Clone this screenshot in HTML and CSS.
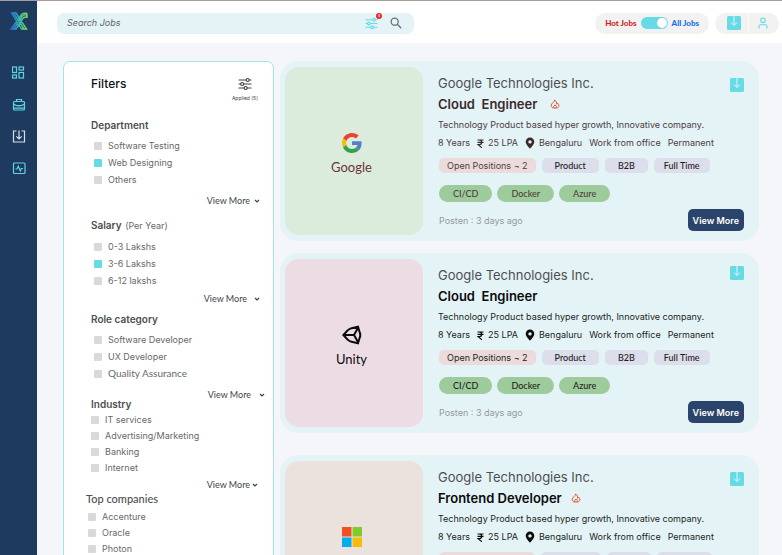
FILE: index.html
```html
<!DOCTYPE html>
<html lang="en">
<head>
<meta charset="utf-8">
<meta name="viewport" content="width=device-width, initial-scale=1">
<title>Jobs</title>
<link rel="stylesheet" href="styles.css">
</head>
<body>
<svg class="sprite" aria-hidden="true">
  <symbol id="sliders" viewBox="0 0 14 14"><g fill="none" stroke="currentColor" stroke-width="1.2" stroke-linecap="round"><path d="M1 3h7M11.500 3H13M1 7h1.500M6 7h7M1 11h5M9.500 11H13"/><circle cx="9.700" cy="3" r="1.500"/><circle cx="4.200" cy="7" r="1.500"/><circle cx="7.700" cy="11" r="1.500"/></g></symbol>
  <symbol id="save" viewBox="0 0 14 14"><rect width="14" height="14" rx="1.500" fill="#66dbe5"/><path d="M7 0v9.300M4 6.500l3 3 3-3" fill="none" stroke="#e4f4f7" stroke-width="1"/></symbol>
  <symbol id="chevron" viewBox="0 0 6 6"><path d="M1 2l2 2 2-2" fill="none" stroke="currentColor" stroke-width="1.200"/></symbol>
  <symbol id="rupee" viewBox="0 0 7 9"><path d="M.5 1h6M.5 3.300h6M.8 1h1.500c3.200 0 3.200 4.600 0 4.600H1L4.900 8.700" fill="none" stroke="currentColor" stroke-width="1.200"/></symbol>
  <symbol id="pin" viewBox="0 0 10 12"><path fill="currentColor" fill-rule="evenodd" d="M5 .5a4.300 4.300 0 0 0-4.300 4.300C.7 7.800 5 11.700 5 11.700s4.300-3.900 4.300-6.900A4.300 4.300 0 0 0 5 .5zm0 2.700a1.700 1.700 0 1 1 0 3.400 1.700 1.700 0 0 1 0-3.400z"/></symbol>
  <symbol id="flame" viewBox="0 0 10 10"><path d="M4.700 1C4.700 3 1.200 4.200 1.200 6.500 1.200 8 2.300 9 3.500 9h3C7.900 9 8.900 8 8.900 6.600c0-1-.6-1.800-1.200-2.400-.2.600-.5.900-1 1C6.700 3.400 6.100 1.800 4.700 1zM3.700 8.800V7.300L5 5.900l1.300 1.400v1.500" fill="none" stroke="#e8542f" stroke-width="1" stroke-linejoin="round"/></symbol>
</svg>
<div class="app">
  <nav class="sidebar" aria-label="Main">
    <a class="logo" href="#" aria-label="Home">
      <svg viewBox="0 0 18 18" width="18" height="18" fill="none">
        <defs><linearGradient id="lg" x1="0" y1="0" x2="1" y2="0"><stop offset="0" stop-color="#2f6bd8"/><stop offset=".5" stop-color="#35b6b4"/><stop offset="1" stop-color="#7fe04a"/></linearGradient></defs>
        <g stroke="url(#lg)" stroke-width="1.400"><path d="M1.500 1h4.500l10.500 16h-5zM3.500 1L14 17M17 1.500c-3-.6-5.500.5-6.500 2.500L1 17h5L12.500 7M3.500 17L12 4.500c1-1.500 2.500-2 5-1.500M12.500 7c1-1.600 2.500-2.200 4-2M17 1.500V6"/></g>
      </svg>
    </a>
    <a class="nav-item" href="#" aria-label="Dashboard"><svg viewBox="0 0 14 14" width="14" height="14" fill="none" stroke="currentColor" stroke-width="1.200"><rect x=".5" y="1" width="4" height="5.500"/><rect x="7" y="1" width="4.500" height="3"/><rect x=".5" y="9" width="4" height="3"/><rect x="7" y="6.500" width="4.500" height="5.500"/></svg></a>
    <a class="nav-item" href="#" aria-label="Jobs"><svg viewBox="0 0 14 14" width="14" height="14" fill="none" stroke="currentColor" stroke-width="1.200"><rect x="1.500" y="3.500" width="11" height="8.500" rx="1"/><path d="M4.500 3.500v-2h5v2M1.500 6C4 8.500 10 8.500 12.500 6M6 7.700h2M1.500 10.200h11"/></svg></a>
    <a class="nav-item nav-item--light" href="#" aria-label="Saved"><svg viewBox="0 0 14 14" width="14" height="14" fill="none" stroke="currentColor" stroke-width="1.200"><path d="M4.500 1h-3v11h11V1h-3M7 .5V9M4.300 6.300L7 9l2.700-2.700"/></svg></a>
    <a class="nav-item" href="#" aria-label="Activity"><svg viewBox="0 0 14 14" width="14" height="14" fill="none" stroke="currentColor" stroke-width="1.200"><rect x="1.500" y="1" width="11.500" height="10.500" rx="1"/><path d="M3.500 7H5l1.300-2.800 2 4.800 1-2.500H11"/></svg></a>
  </nav>

  <div class="page">
    <header class="topbar">
      <form class="search" role="search">
        <input class="search-input" type="search" placeholder="Search Jobs" aria-label="Search Jobs">
        <button class="icon-btn search-filter" type="button" aria-label="Filters"><svg width="13" height="13"><use href="#sliders"/></svg><span class="badge">4</span></button>
        <button class="icon-btn search-go" type="submit" aria-label="Search"><svg viewBox="0 0 12 12" width="12" height="12" fill="none" stroke="#6c7072" stroke-width="1.300"><circle cx="4.700" cy="4.700" r="3.500"/><path d="M7.300 7.300l3.900 3.900"/></svg></button>
      </form>
      <div class="pill">
        <label class="hot" for="scope">Hot Jobs</label>
        <input class="switch" id="scope" type="checkbox" role="switch" checked>
        <label class="all" for="scope">All Jobs</label>
      </div>
      <div class="pill pill--split">
        <button class="icon-btn split-cell" type="button" aria-label="Saved jobs"><svg width="14" height="14"><use href="#save"/></svg></button>
        <button class="icon-btn split-cell" type="button" aria-label="Profile"><svg viewBox="0 0 12 12" width="12" height="12" fill="none" stroke="#66dbe5" stroke-width="1.100"><circle cx="6" cy="3.300" r="2.300"/><path d="M2 11.500V9.300q0-1.500 1.500-1.500h5q1.500 0 1.500 1.500v2.200"/></svg></button>
      </div>
    </header>

    <main class="content">
      <aside class="filters">
        <div class="filters-head">
          <h2>Filters</h2>
          <div class="applied"><svg width="14" height="14"><use href="#sliders"/></svg><span>Applied (5)</span></div>
        </div>
        <fieldset class="group">
          <legend>Department</legend>
          <label><input type="checkbox">Software Testing</label>
          <label><input type="checkbox" checked>Web Designing</label>
          <label><input type="checkbox">Others</label>
          <button class="more" type="button">View More <svg width="6" height="6"><use href="#chevron"/></svg></button>
        </fieldset>
        <fieldset class="group">
          <legend>Salary <small>(Per Year)</small></legend>
          <label><input type="checkbox">0-3 Lakshs</label>
          <label><input type="checkbox" checked>3-6 Lakshs</label>
          <label><input type="checkbox">6-12 lakshs</label>
          <button class="more more--wide" type="button">View More <svg width="6" height="6"><use href="#chevron"/></svg></button>
        </fieldset>
        <fieldset class="group group--role">
          <legend>Role category</legend>
          <label><input type="checkbox">Software Developer</label>
          <label><input type="checkbox">UX Developer</label>
          <label class="lato"><input type="checkbox">Quality Assurance</label>
          <button class="more more--edge" type="button">View More <svg width="6" height="6"><use href="#chevron"/></svg></button>
        </fieldset>
        <fieldset class="group group--dense">
          <legend>Industry</legend>
          <label><input type="checkbox">IT services</label>
          <label><input type="checkbox">Advertising/Marketing</label>
          <label><input type="checkbox">Banking</label>
          <label><input type="checkbox">Internet</label>
          <button class="more more--tight" type="button">View More <svg width="6" height="6"><use href="#chevron"/></svg></button>
        </fieldset>
        <fieldset class="group group--dense group--companies">
          <legend>Top companies</legend>
          <label><input type="checkbox">Accenture</label>
          <label><input type="checkbox">Oracle</label>
          <label><input type="checkbox">Photon</label>
        </fieldset>
      </aside>

      <section class="jobs" aria-label="Jobs">
        <article class="card card--visited">
          <div class="brand brand--green">
            <svg viewBox="0 0 48 48" width="20" height="20"><path fill="#ea4335" d="M24 9.500c3.540 0 6.710 1.220 9.210 3.600l6.850-6.850C35.900 2.380 30.470 0 24 0 14.620 0 6.510 5.380 2.560 13.220l7.980 6.190C12.430 13.720 17.740 9.500 24 9.500z"/><path fill="#5680c4" d="M46.980 24.550c0-1.570-.15-3.090-.38-4.550H24v9.020h12.940c-.58 2.960-2.260 5.480-4.780 7.180l7.730 6c4.510-4.180 7.090-10.360 7.090-17.650z"/><path fill="#fbbc05" d="M10.530 28.590c-.48-1.450-.76-2.990-.76-4.590s.27-3.140.76-4.590l-7.980-6.190C.92 16.460 0 20.120 0 24c0 3.880.92 7.540 2.560 10.780l7.970-6.190z"/><path fill="#34a04c" d="M24 48c6.480 0 11.930-2.130 15.890-5.810l-7.730-6c-2.150 1.450-4.920 2.300-8.160 2.300-6.260 0-11.570-4.220-13.470-9.910l-7.980 6.190C6.510 42.620 14.620 48 24 48z"/></svg>
            <span>Google</span>
          </div>
          <div class="info">
            <div class="head"><p class="company">Google Technologies Inc.</p><button class="icon-btn" type="button" aria-label="Save job"><svg width="14" height="14"><use href="#save"/></svg></button></div>
            <h3>Cloud&nbsp; Engineer <svg width="10" height="10"><use href="#flame"/></svg></h3>
            <p class="desc">Technology Product based hyper growth, Innovative company.</p>
            <ul class="meta"><li>8 Years</li><li><svg width="7" height="9"><use href="#rupee"/></svg>25 LPA</li><li><svg width="10" height="12"><use href="#pin"/></svg>Bengaluru</li><li>Work from office</li><li>Permanent</li></ul>
            <ul class="tags"><li class="open">Open Positions ¬ 2</li><li>Product</li><li>B2B</li><li>Full Time</li></ul>
            <ul class="skills"><li>CI/CD</li><li>Docker</li><li>Azure</li></ul>
            <div class="foot"><span>Posten : 3 days ago</span><button class="view" type="button">View More</button></div>
          </div>
        </article>

        <article class="card card--top-save">
          <div class="brand brand--pink">
            <svg viewBox="0 0 20 20" width="20" height="20" fill="none" stroke="#0b0b0c" stroke-width="2"><path d="M8.500 3.500L16 1.800l2.200 7.200M18.200 11L16 18.200l-7.500-1.700M6 5L1.300 10 6 15M1.300 10H12M12 10l4.500-8M12 10l4.500 8M6 5l2.500-1.500M6 15l2.500 1.500M18.200 8v4"/></svg>
            <span>Unity</span>
          </div>
          <div class="info">
            <div class="head"><p class="company">Google Technologies Inc.</p><button class="icon-btn" type="button" aria-label="Save job"><svg width="14" height="14"><use href="#save"/></svg></button></div>
            <h3>Cloud&nbsp; Engineer</h3>
            <p class="desc">Technology Product based hyper growth, Innovative company.</p>
            <ul class="meta"><li>8 Years</li><li><svg width="7" height="9"><use href="#rupee"/></svg>25 LPA</li><li><svg width="10" height="12"><use href="#pin"/></svg>Bengaluru</li><li>Work from office</li><li>Permanent</li></ul>
            <ul class="tags"><li class="open">Open Positions ¬ 2</li><li>Product</li><li>B2B</li><li>Full Time</li></ul>
            <ul class="skills"><li>CI/CD</li><li>Docker</li><li>Azure</li></ul>
            <div class="foot"><span>Posten : 3 days ago</span><button class="view" type="button">View More</button></div>
          </div>
        </article>

        <article class="card card--next">
          <div class="brand brand--sand">
            <svg viewBox="0 0 20 20" width="20" height="20"><path fill="#f25022" d="M0 0h9.500v9.500H0z"/><path fill="#80cc28" d="M10.500 0H20v9.500h-9.500z"/><path fill="#00adef" d="M0 10.500h9.500V20H0z"/><path fill="#fbbc09" d="M10.500 10.500H20V20h-9.500z"/></svg>
          </div>
          <div class="info">
            <div class="head"><p class="company">Google Technologies Inc.</p><button class="icon-btn" type="button" aria-label="Save job"><svg width="14" height="14"><use href="#save"/></svg></button></div>
            <h3>Frontend Developer <svg width="10" height="10"><use href="#flame"/></svg></h3>
            <p class="desc">Technology Product based hyper growth, Innovative company.</p>
            <ul class="meta"><li>8 Years</li><li><svg width="7" height="9"><use href="#rupee"/></svg>25 LPA</li><li><svg width="10" height="12"><use href="#pin"/></svg>Bengaluru</li><li>Work from office</li><li>Permanent</li></ul>
            <ul class="tags tags--empty"><li class="open"></li><li></li><li></li><li></li></ul>
          </div>
        </article>
      </section>
    </main>
  </div>
</div>
</body>
</html>
```
FILE: styles.css
```css
* { box-sizing: border-box; }
body, h2, h3, p, ul, fieldset { margin: 0; padding: 0; }
ul { list-style: none; }
fieldset { border: 0; min-width: 0; }
svg { display: block; flex: none; }
button { font: inherit; cursor: pointer; }

body {
  background: #f5f6fa;
  color: #1d1f21;
  font-family: Inter, "Liberation Sans", sans-serif;
  font-size: 9px;
}

.sprite { position: absolute; width: 0; height: 0; }

.app {
  display: flex;
  height: 100vh;
  overflow: hidden;
  border-top: 1px solid #a99b9f;
}

/* Sidebar */
.sidebar {
  flex: none;
  width: 37px;
  padding-top: 11px;
  display: flex;
  flex-direction: column;
  align-items: center;
  gap: 18px;
  background: #1f3a5f;
}
.logo { margin-bottom: 18px; }
.nav-item { color: #5fd3e0; }
.nav-item--light { color: #d5dfea; }

.page {
  flex: 1;
  min-width: 0;
  display: flex;
  flex-direction: column;
}

/* Top bar */
.topbar {
  flex: none;
  display: flex;
  align-items: center;
  gap: 6px;
  height: 42px;
  padding: 2px 3px 0 20px;
  background: #fff;
}
.search {
  flex: 0 1 357px;
  display: flex;
  align-items: center;
  gap: 12px;
  height: 21px;
  margin-right: auto;
  padding: 0 12px 0 10px;
  border-radius: 7px;
  background: #e4f3f6;
}
.search-input {
  flex: 1;
  min-width: 0;
  padding: 0;
  border: 0;
  outline: 0;
  background: none;
  font: italic 9px/12px Inter, "Liberation Sans", sans-serif;
}
.search-input::placeholder { color: #606466; opacity: 1; }
.icon-btn {
  display: block;
  padding: 0;
  border: 0;
  background: none;
}
.search-filter { position: relative; color: #66dbe5; }
.badge {
  position: absolute;
  top: -4px;
  right: -4px;
  width: 6px;
  height: 6px;
  border-radius: 50%;
  background: #e02b2b;
  color: #fff;
  font-size: 4px;
  line-height: 6px;
  text-align: center;
}
.pill {
  display: flex;
  align-items: center;
  gap: 4px;
  height: 21px;
  padding: 0 10px;
  border-radius: 11px;
  background: #f2f2f2;
  font: 900 8px/12px Lato, sans-serif;
}
.hot { color: #d01f1f; }
.all { color: #1570e8; }
.switch {
  appearance: none;
  display: flex;
  justify-content: flex-end;
  width: 27px;
  height: 12px;
  margin: 0;
  padding: 1px;
  border-radius: 6px;
  background: #66dbe5;
}
.switch::before {
  content: "";
  width: 10px;
  height: 10px;
  border-radius: 50%;
  background: #fff;
}
.pill--split { gap: 0; padding: 0 2px 0 4px; }
.split-cell {
  display: flex;
  align-items: center;
  justify-content: center;
  width: 29px;
  height: 21px;
}
.split-cell + .split-cell { border-left: 1px solid #fafafa; }

/* Content */
.content {
  flex: 1;
  min-height: 0;
  display: grid;
  grid-template-columns: 211px minmax(0, 1fr);
  align-items: start;
  gap: 6px;
  padding: 18px 23px 0 26px;
  overflow: hidden auto;
  scrollbar-width: none;
}

/* Filters */
.filters {
  padding: 13px 13px 16px 27px;
  border: 1px solid #9fe5ea;
  border-radius: 7px;
  background: #fff;
}
.filters-head {
  display: flex;
  justify-content: space-between;
  height: 43px;
}
.filters h2 {
  color: #111;
  font-size: 12px;
  font-weight: 500;
  line-height: 18px;
}
.applied {
  display: flex;
  flex-direction: column;
  align-items: center;
  gap: 3px;
  padding: 2px 2px 0 0;
  color: #444;
  font-size: 5px;
  line-height: 8px;
}
.group { margin-bottom: 11px; color: #66696b; }
.group legend {
  margin-bottom: 5px;
  padding: 0;
  color: #4c4f51;
  font-size: 10px;
  font-weight: 600;
  line-height: 14px;
}
.group small {
  padding-left: 1px;
  color: #66696b;
  font-size: 9px;
  font-weight: 400;
}
.group label {
  display: flex;
  align-items: center;
  gap: 6px;
  padding-left: 3px;
  line-height: 17px;
}
.group label.lato { font: 10px/17px Lato, sans-serif; }
.group input {
  appearance: none;
  width: 8px;
  height: 8px;
  margin: 0;
  border-radius: 1px;
  background: #d9d9d9;
}
.group input:checked { background: #66dbe5; }
.more {
  display: flex;
  align-items: center;
  gap: 4px;
  margin: 7px 0 0 auto;
  padding: 0;
  border: 0;
  background: none;
  color: #3d434c;
  font: 9px/12px Lato, sans-serif;
}
.more--wide { gap: 7px; margin-top: 4px; }
.more--edge { gap: 8px; margin-right: -5px; }
.more--tight { gap: 2px; margin: 3px 2px 0 auto; }
.group:nth-of-type(2) { margin-bottom: 7px; }
.group--role { margin-bottom: -4px; }
.group--dense { margin-bottom: 1px; }
.group--dense legend { margin-bottom: 1px; }
.group--dense label { padding-left: 0; line-height: 16px; }
.group--companies { margin-left: -5px; }
.group--companies legend {
  margin-bottom: 3px;
  font: 500 11px/14px Lato, sans-serif;
}
.group--companies label { padding-left: 2px; }

/* Job cards */
.jobs {
  display: flex;
  flex-direction: column;
  gap: 12px;
}
.card {
  display: grid;
  grid-template-columns: 138px minmax(0, 1fr);
  gap: 15px;
  padding: 6px 15px 6px 5px;
  border-radius: 18px;
  background: #e3f3f6;
}
.card--next { margin-top: 10px; }
.brand {
  display: flex;
  flex-direction: column;
  align-items: center;
  justify-content: center;
  gap: 4px;
  padding: 8px 5px 0 0;
  border-radius: 14px;
  color: #0b0b0c;
  font: 13px/20px Lato, sans-serif;
}
.brand--green { background: #dcecdc; color: #6b3438; }
.brand--pink { background: #ecdce4; }
.brand--sand {
  justify-content: flex-start;
  min-height: 168px;
  padding-top: 66px;
  background: #ece2dd;
}
.info { padding: 7px 0 4px; }
.head {
  display: flex;
  align-items: flex-end;
  justify-content: space-between;
}
.card--top-save .head { align-items: flex-start; }
.company {
  color: #4d4f52;
  font-size: 13px;
  line-height: 18px;
}
.card h3 {
  display: flex;
  align-items: center;
  gap: 13px;
  margin-top: 3px;
  color: #0b0b0c;
  font-size: 13px;
  font-weight: 600;
  line-height: 18px;
}
.card--next h3 { gap: 9px; }
.desc { margin-top: 6px; line-height: 12px; }
.meta {
  display: flex;
  gap: 7px;
  margin-top: 5px;
  line-height: 14px;
  white-space: nowrap;
}
.meta li { display: flex; align-items: center; gap: 4px; }
.meta svg { color: #0b0b0c; }
.card--visited .desc,
.card--visited .meta,
.card--visited .open,
.card--visited .skills { color: #4c3d40; }
.card--visited h3,
.card--visited .meta svg { color: #3d292c; }
.tags, .skills {
  display: flex;
  gap: 6px;
  padding-left: 1px;
  white-space: nowrap;
}
.tags { margin-top: 8px; }
.tags li {
  padding: 0 13px;
  border-radius: 5px;
  background: #dcdeeb;
  font: 500 9px/15px Lato, sans-serif;
}
.tags li:last-child { padding: 0 10px; }
.tags .open {
  padding: 0 8px;
  background: #ecdbdb;
  font: 9px/15px Inter, sans-serif;
}
.tags--empty li { width: 60px; height: 15px; }
.tags--empty .open { width: 96px; }
.tags--empty li:nth-child(3) { width: 44px; }
.tags--empty li:nth-child(4) { width: 55px; }
.skills { gap: 5px; margin-top: 12px; }
.skills li {
  padding: 0 14px;
  border-radius: 9px;
  background: #9ecb9b;
  font: 500 9px/17px Lato, sans-serif;
}
.foot {
  display: flex;
  align-items: center;
  justify-content: space-between;
  margin-top: 7px;
  padding-left: 1px;
  color: #949a9d;
}
.view {
  height: 22px;
  padding: 0 5px;
  border: 0;
  border-radius: 5px;
  background: #2b446b;
  color: #fff;
  font-weight: 600;
}
```
